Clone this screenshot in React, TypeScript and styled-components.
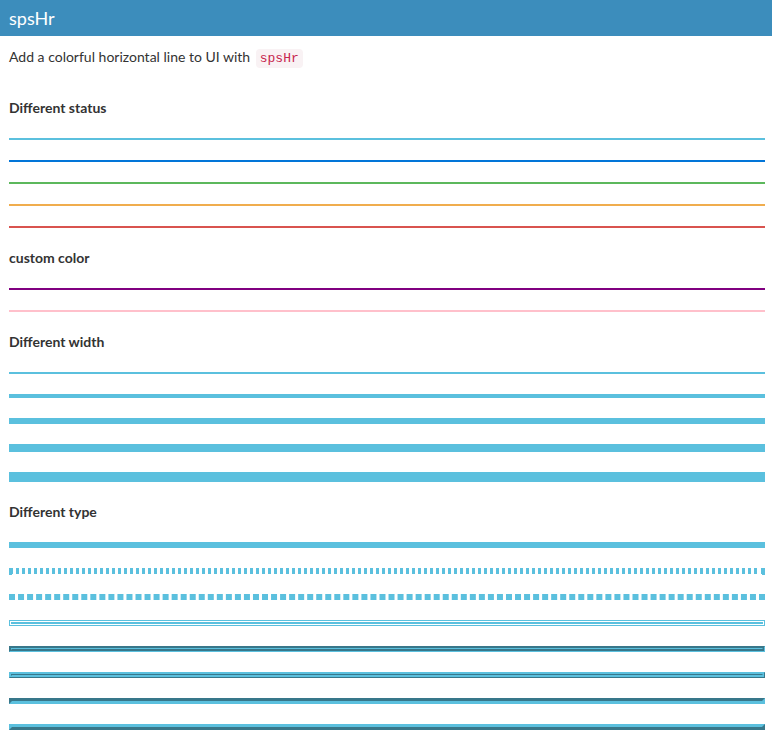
import React from "react";
import styled, { createGlobalStyle } from "styled-components";

const GlobalStyle = createGlobalStyle`
  html, body {
    margin: 0;
    padding: 0;
    background: #ffffff;
  }
  body {
    font-family: "Lato", "Noto Sans", sans-serif;
    font-size: 14px;
    color: #333333;
  }
`;

const Header = styled.div`
  height: 36px;
  background: #3c8dbc;
  color: #ffffff;
  display: flex;
  align-items: center;
  padding-left: 9px;
  font-size: 18px;
  font-family: "Lato", "Noto Sans", sans-serif;
`;

const Body = styled.div`
  display: flex;
  flex-direction: column;
  padding: 0 7px 20px 9px;
`;

const Desc = styled.p`
  margin: 11px 0 0;
  line-height: 20px;
  font-size: 14px;
`;

const Code = styled.code`
  font-family: "Liberation Mono", monospace;
  font-size: 13px;
  color: #c7254e;
  background: #f9f2f4;
  border-radius: 4px;
  padding: 2px 4px;
  margin-left: 2px;
`;

const Heading = styled.h5<{ $first?: boolean }>`
  margin: ${(p) => (p.$first ? "19px" : "0")} 0 0;
  height: 40px;
  line-height: 40px;
  font-size: 14px;
  font-weight: 700;
  color: #333333;
`;

const Line = styled.hr<{ $color: string; $size: number; $kind?: string }>`
  display: block;
  box-sizing: content-box;
  height: 0;
  margin: 10px 0;
  border: ${(p) => p.$size / 2}px ${(p) => p.$kind ?? "solid"} ${(p) => p.$color};
`;

const INFO = "#5bc0de";

const statusColors = ["#5bc0de", "#0275d8", "#5cb85c", "#f0ad4e", "#d9534f"];
const customColors = ["purple", "pink"];
const widths = [2, 4, 6, 8, 10];
const kinds = ["solid", "dotted", "dashed", "double", "groove", "ridge", "inset", "outset"];

export default function App() {
  return (
    <>
      <GlobalStyle />
      <Header>spsHr</Header>
      <Body>
        <Desc>
          Add a colorful horizontal line to UI with <Code>spsHr</Code>
        </Desc>
        <Heading $first>Different status</Heading>
        {statusColors.map((c) => (
          <Line key={c} $color={c} $size={2} />
        ))}
        <Heading>custom color</Heading>
        {customColors.map((c) => (
          <Line key={c} $color={c} $size={2} />
        ))}
        <Heading>Different width</Heading>
        {widths.map((w) => (
          <Line key={w} $color={INFO} $size={w} />
        ))}
        <Heading>Different type</Heading>
        {kinds.map((k) => (
          <Line key={k} $color={INFO} $size={6} $kind={k} />
        ))}
      </Body>
    </>
  );
}
